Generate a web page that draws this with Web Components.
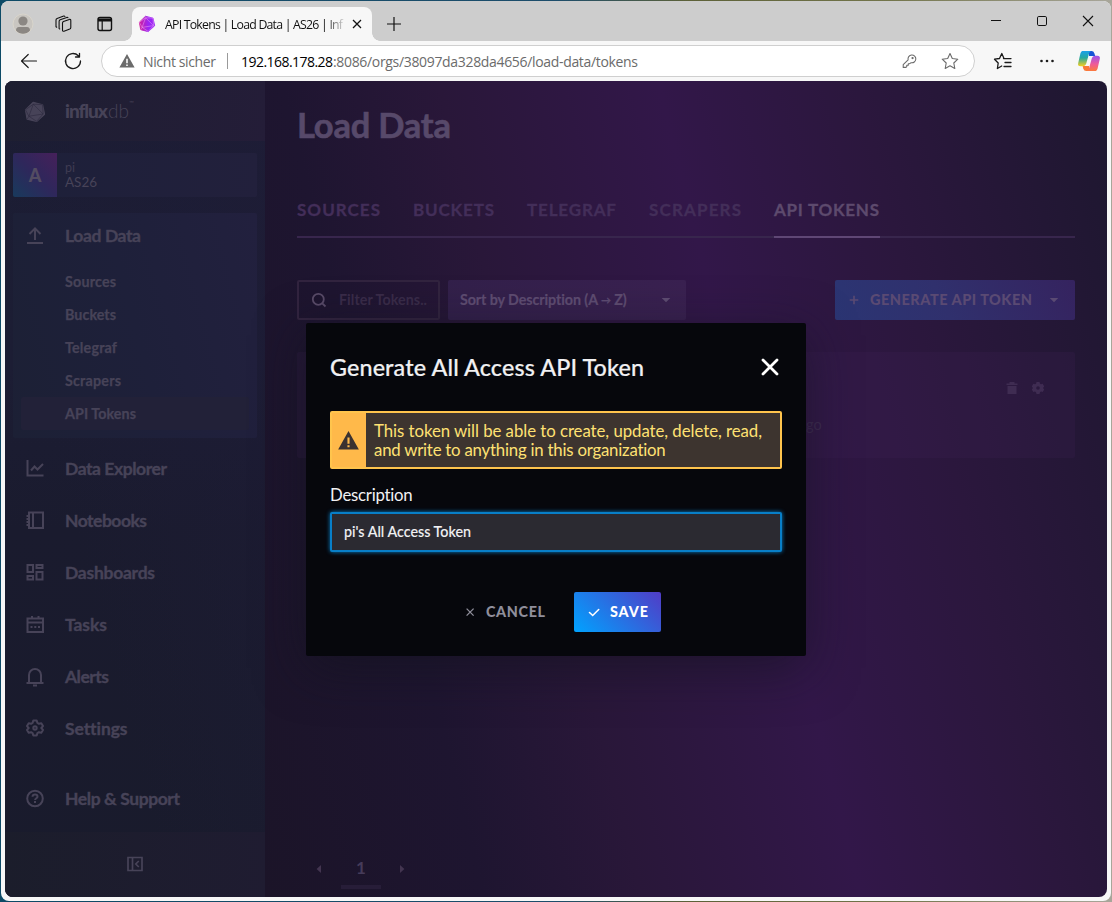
<!DOCTYPE html>
<html lang="de">
<head>
<meta charset="utf-8">
<title>API Tokens | Load Data | AS26 | InfluxDB</title>
<style>
html,body{margin:0;width:1112px;height:902px;overflow:hidden}
body{background:linear-gradient(90deg,#0d4a66 0,#1d4d6b 50%,#5d6138 62%,#73754b 80%,#a8a69a 100%);font-family:Lato,"Liberation Sans",sans-serif}
</style>
</head>
<body>
<browser-window></browser-window>
<script>
const define=(name,html,after)=>customElements.define(name,class extends HTMLElement{
  connectedCallback(){
    if(this.shadowRoot)return;
    const t=document.createElement('template');
    t.innerHTML=typeof html==='function'?html(this):html;
    this.attachShadow({mode:'open'}).append(t.content.cloneNode(true));
    if(after)after(this);
  }
});

const P={
  upload:'<g fill="none" stroke="currentColor" stroke-width="2"><path d="M9 14V2.500M3.500 8 9 2.400 14.500 8M1 17h16"/></g>',
  chart:'<g fill="none" stroke="currentColor" stroke-width="2"><path d="M1.500 1v15.500H17.500M5 11.500l3.500-4 3 3L17 5"/></g>',
  book:'<g fill="none" stroke="currentColor" stroke-width="2"><path d="M3 1.500h14v15.500H3zM7 1.500V17M.500 5H3M.500 8H3M.500 11H3M.500 14H3"/></g>',
  dash:'<g fill="none" stroke="currentColor" stroke-width="2"><path d="M1.500 2H7v7H1.500zM10.500 2h6v3h-6zM10.500 9h6v7.500h-6zM1.500 13H7v3.500H1.500z"/></g>',
  calendar:'<g fill="none" stroke="currentColor" stroke-width="2"><path d="M1.500 3.500h15.500v13.500H1.500zM1.500 7.500H17M6 1v3M12.500 1v3"/><path d="M4.500 12h2M8.300 12h2M12 12h2"/></g>',
  bell:'<g fill="none" stroke="currentColor" stroke-width="2"><path d="M.500 16h17M3 16V8a6 6 0 0 1 12 0v8"/><path d="M7 18.500h4"/></g>',
  gear:'<g fill="none" stroke="currentColor" stroke-width="2" stroke-linejoin="round"><path d="M7.300 1.500h3.400l.7 2.400 1.500.9 2.400-.6 1.700 2.900-1.700 1.900 1.700 1.900-1.700 2.900-2.400-.6-1.500.9-.7 2.400H7.300l-.7-2.400-1.500-.9-2.400.6L1 10.900 2.700 9 1 7.100l1.700-2.900 2.400.6 1.500-.9z"/><circle cx="9" cy="9" r="1.700"/></g>',
  help:'<g fill="none" stroke="currentColor" stroke-width="2"><circle cx="9" cy="9.500" r="7.800"/><path d="M6.500 7.700c.2-3 5-3 5 0 0 1.600-2.400 1.600-2.400 3.300M9 12.100v2"/></g>',
  collapse:'<g fill="none" stroke="currentColor" stroke-width="1.700"><path d="M2 2.500h14v13H2zM6.500 2.500v13M12.800 6 9.800 9l3 3"/></g>',
  search:'<g fill="none" stroke="currentColor" stroke-width="1.800"><circle cx="8.300" cy="8.300" r="5.500"/><path d="m12.300 12.300 3.200 3.200"/></g>',
  trash:'<path fill="currentColor" d="M3.500 4.500h3V3h5v1.500h3V6h-11zM4.500 7h9v8h-9z"/>',
  cog:'<path fill="currentColor" fill-rule="evenodd" d="M7.500 3h3l.5 1.700 1 .6 1.700-.5 1.500 2.600L14 9l1.200 1.400-1.500 2.600-1.700-.4-1 .6-.5 1.800h-3L7 13.200l-1-.6-1.700.4-1.500-2.600L4 9 2.800 7.400l1.500-2.600 1.700.5 1-.6zM9 7.200a1.800 1.800 0 1 0 0 3.600 1.800 1.800 0 0 0 0-3.600z"/>',
  caretDown:'<path fill="currentColor" d="M4.700 7h8.600L9 11.300z"/>',
  caretLeft:'<path fill="currentColor" d="M11 5v8L6.600 9z"/>',
  caretRight:'<path fill="currentColor" d="M7 5v8l4.400-4z"/>',
  plus:'<path stroke="currentColor" stroke-width="1.600" d="M9 4.700v8.600M4.700 9h8.600"/>',
  x:'<path stroke="currentColor" stroke-width="1.300" d="m5.600 5.600 7 7m0-7-7 7"/>',
  check:'<path fill="none" stroke="currentColor" stroke-width="1.600" stroke-linecap="round" d="m4.500 9.500 3.200 3 6-6"/>',
  close:'<path stroke="currentColor" stroke-width="2.800" stroke-linecap="round" d="m2 2 14 14m0-14L2 16"/>',
  warn:'<path fill="currentColor" fill-rule="evenodd" d="M9 0 18.800 17.500H-.8zM8 6.200h2V12H8zm0 7.300h2v2H8z"/>',
  back:'<path fill="none" stroke="currentColor" stroke-width="1.200" stroke-linecap="round" stroke-linejoin="round" d="M16.500 9H1.500m6.700-6.500L1.500 9l6.700 6.500"/>',
  reload:'<path fill="none" stroke="currentColor" stroke-width="1.300" stroke-linecap="round" stroke-linejoin="round" d="M16.500 9A7.500 7.500 0 1 1 14.300 3.700L15.500 5M15.500 1.300V5h-4"/>',
  star:'<path fill="none" stroke="currentColor" stroke-width="1.100" stroke-linejoin="round" d="m9 1.500 2.300 5 5.500.7-4 3.800 1 5.500L9 13.800l-4.800 2.700 1-5.500-4-3.800 5.500-.7z"/>',
  favs:'<g fill="none" stroke="currentColor" stroke-width="1.300" stroke-linejoin="round" stroke-linecap="round"><path d="M9.500 6.600H10L7.800 1.500l-2.300 5-5 .7 3.700 3.800-.8 5.500 4.300-2.500M10 6.600h7M11 10.500h6M10 14.500h7"/></g>',
  key:'<g fill="none" stroke="currentColor" stroke-width="1.200" stroke-linejoin="round"><path d="M8 7.600a4.400 4.400 0 1 1 3.400 3.300L9.700 12H8.200v1.700H6.500v1.600l-.9.900H2.500v-3z"/><circle cx="13" cy="5.700" r=".7" fill="currentColor"/></g>',
  dots:'<g fill="currentColor"><circle cx="3.500" cy="9" r="1.300"/><circle cx="9" cy="9" r="1.300"/><circle cx="14.500" cy="9" r="1.300"/></g>',
  tabx:'<path stroke="currentColor" stroke-width="1.400" d="m4.500 4.500 9 9m0-9-9 9"/>',
  newtab:'<path stroke="currentColor" stroke-width="1.200" d="M9 2v14M2 9h14"/>',
  min:'<path stroke="currentColor" stroke-width="1" d="M4 8.500h10"/>',
  max:'<rect x="4.500" y="4.500" width="9" height="9" rx="1.300" fill="none" stroke="currentColor"/>',
  winx:'<path stroke="currentColor" stroke-width="1.100" d="m4 4 10 10M14 4 4 14"/>',
  workspaces:'<g fill="none" stroke="currentColor" stroke-width="1.100" stroke-linejoin="round" stroke-linecap="round"><path d="M7.500 8q0-1.100 1-1.500l5.800-2.100q1.500-.4 1.500 1v7.200q0 1.100-1 1.500l-5.800 2.100q-1.500.4-1.500-1zM4.700 14l-.6-.4V6.400q0-1.200 1.100-1.600l6.600-2.400q.9-.2 1.200.4M1.700 12.200l-.7-.5V4.900q0-1.100 1.100-1.500L8.700 1q.9-.2 1.200.4"/></g>',
  tabs:'<rect x="2" y="2.500" width="13.500" height="13" rx="2" fill="none" stroke="currentColor" stroke-width="1.400"/><path fill="currentColor" d="M2 3.500h13.500V6.500H2z"/><path stroke="currentColor" stroke-width="1.200" d="M6.200 6v9.500"/>',
  person:'<circle cx="9" cy="9" r="10" fill="#c9c6c1" stroke="#d9d5cc"/><circle cx="9" cy="6" r="4.600" fill="#8b8783"/><path fill="#8b8783" d="M2 15.500q0-3.500 3-3.500h8q3 0 3 3.500-3 3.300-7 3.300t-7-3.300z"/>',
  influx:'<defs><linearGradient id="i" x2="1"><stop stop-color="var(--from,currentColor)"/><stop offset=".6" stop-color="var(--to,currentColor)"/></linearGradient></defs><path fill="url(#i)" stroke="url(#i)" stroke-width="1" stroke-linejoin="round" d="M7.300.3 15.800 2.400 17.600 11l-7.200 6.600-8.500-2.200L.4 7z"/><path fill="none" stroke="var(--cut,#2c293f)" stroke-width=".55" d="M7.500 2 3.500 12.800 16.300 10.800zM7.500 2 .4 7M7.500 2l8.300.4.500 8.400M3.500 12.800l6.900 4.600 5.900-6.600M.4 7l3.100 5.800-1.500 2.600"/>',
  copilot:'<defs><linearGradient id="a" x2="0" y2="1"><stop stop-color="#1aa0ea"/><stop offset=".45" stop-color="#25a8a0"/><stop offset="1" stop-color="#f6cf1c"/></linearGradient><linearGradient id="b" x2="0" y2="1"><stop stop-color="#9a52ec"/><stop offset=".55" stop-color="#f05a98"/><stop offset="1" stop-color="#fb7a3c"/></linearGradient></defs><path fill="#1553d6" d="M9 0h2.200q2 0 2.600 2l.8 2.500H9z"/><path fill="#f97a36" d="M9 18H6.500q-2 0-2.600-2l-.6-2.500H9z"/><path fill="url(#a)" d="M3 0h8q-1.400.4-1.900 2L6.600 11q-.8 2.700-3.200 2.700H1.500q-3-.1-2.200-3L1.300 2Q1.800.2 3 0z"/><path fill="url(#b)" d="M15 18H7q1.400-.4 1.900-2l2.500-9q.8-2.700 3.200-2.700h1.900q3 .1 2.200 3L16.700 16q-.5 1.800-1.700 2z"/>'
};
define('ui-icon',h=>{const s=h.getAttribute('size')||18;
  return `<style>:host{display:block;flex:none;width:${s}px;height:${s}px}svg{display:block;overflow:visible}</style><svg width="${s}" height="${s}" viewBox="0 0 18 18">${P[h.getAttribute('name')]}</svg>`});

define('browser-window',`<style>
:host{display:flex;flex-direction:column;box-sizing:border-box;width:1110px;height:900px;margin:1px;border-radius:8px;overflow:hidden;background:#f7f7f7}
.page{flex:1;display:flex;margin:0 4px 4px;border-radius:8px;overflow:hidden;background:linear-gradient(76deg,#1b1428 0,#1e1530 21%,#291739 36%,#321749 57%,#2b173d 76%,#1f1731 98%);background-size:842px 816px;background-position:right top;position:relative}
</style><edge-tabs></edge-tabs><edge-toolbar></edge-toolbar>
<div class="page"><side-nav></side-nav><load-data></load-data><token-dialog></token-dialog></div>`);

define('edge-tabs',`<style>
:host{display:flex;height:40px;background:#cdcdcd;font:12.300px "Open Sans","Noto Sans",sans-serif;align-items:center;color:#111}
.left{width:131px;display:flex;align-items:center;box-sizing:border-box;padding:6px 0 0 13px;gap:23px}
.tab{align-self:flex-end;position:relative;width:240px;height:34px;background:#f7f7f7;border-radius:8px 8px 0 0;display:flex;align-items:center;box-sizing:border-box;padding:0 7px}
.tab::before,.tab::after{content:"";position:absolute;bottom:0;width:8px;height:8px;left:-8px;background:radial-gradient(circle at 0 0,transparent 7.500px,#f7f7f7 8px)}
.tab::after{left:240px;background:radial-gradient(circle at 100% 0,transparent 7.500px,#f7f7f7 8px)}
.t{width:180px;margin-left:10px;white-space:nowrap;-webkit-mask:linear-gradient(90deg,#000 160px,transparent 182px);mask:linear-gradient(90deg,#000 160px,transparent 182px)}
.infl{--from:#d0209c;--to:#9a26f5;--cut:#f0a5f5}
.tabx{margin-left:auto}
.new{margin:6px 0 0 13px}.win{margin-left:auto;display:flex;gap:28px;padding-right:14px}
</style><div class="left"><ui-icon name="person"></ui-icon><ui-icon name="workspaces"></ui-icon><ui-icon name="tabs"></ui-icon></div>
<div class="tab"><ui-icon class="infl" name="influx" size="16"></ui-icon><div class="t"><fit-text w="178">API Tokens | Load Data | AS26 | Inf</fit-text></div><ui-icon class="tabx" name="tabx" size="16"></ui-icon></div>
<ui-icon class="new" name="newtab"></ui-icon>
<div class="win"><ui-icon name="min"></ui-icon><ui-icon name="max"></ui-icon><ui-icon name="winx"></ui-icon></div>`);

define('edge-toolbar',`<style>
:host{display:flex;height:40px;align-items:center;color:#1b1b1b;font:14px "Open Sans","Noto Sans",sans-serif}
.b1{margin-left:19px}.b2{margin-left:26px}
.addr{display:flex;align-items:center;box-sizing:border-box;width:874px;height:32px;margin-left:19px;border:1px solid #cfcfcf;border-radius:16px;background:#fff;padding:0 15px 0 18px;color:#6b6b6b}
.sep{width:1px;height:16px;background:#9a9a9a;margin:0 13px 0 11px}
.ns{margin-left:9px}b{font-weight:400;color:#000}.key{margin-left:auto}.st{margin-left:24px}
.f{margin-left:19px}.d{margin-left:26px}.c{margin-left:23px}
</style><ui-icon class="b1" name="back"></ui-icon><ui-icon class="b2" name="reload"></ui-icon>
<div class="addr"><ui-icon name="warn" size="14"></ui-icon><fit-text class="ns" w="73">Nicht sicher</fit-text><span class="sep"></span><fit-text w="92"><b>192.168.178.28</b></fit-text><fit-text w="305">:8086/orgs/38097da328da4656/load-data/tokens</fit-text><ui-icon class="key" name="key" size="16"></ui-icon><ui-icon class="st" name="star"></ui-icon></div>
<ui-icon class="f" name="favs"></ui-icon><ui-icon class="d" name="dots"></ui-icon><ui-icon class="c" name="copilot" size="20"></ui-icon>`);

define('nav-item',h=>`<style>:host{display:flex;align-items:center;height:44px;padding-left:13px;font:700 17.500px Lato,sans-serif;-webkit-text-stroke:.35px currentColor}
ui-icon{margin-right:21px}</style><ui-icon name="${h.getAttribute('icon')}"></ui-icon><slot></slot>`);
define('nav-sub',`<style>:host{display:flex;align-items:center;height:33px;margin:0 8px;padding-left:44px;border-radius:2px;font:700 14.300px Lato,sans-serif;-webkit-text-stroke:.25px currentColor}
:host([active]){background:#222138}::slotted(fit-text){padding-bottom:1px}</style><slot></slot>`);

define('side-nav',`<style>
:host{display:flex;flex-direction:column;width:260px;flex:none;color:#474358;background:linear-gradient(75deg,rgba(31,28,56,0) 35%,rgba(31,28,56,.6)),linear-gradient(180deg,#1b1d33 0,#1c1d34 35%,#1a1b2e 55%,#191b2c 100%)}
.logo{height:60px;display:flex;align-items:center;padding-left:20px;background:linear-gradient(90deg,#1e1f31,#241d38);box-sizing:border-box}
.logo ui-icon{margin:1px 20px 0 0}.name{display:flex;font-size:19px;align-items:flex-start;padding-bottom:1px}.name b{font-weight:900}.light{font-weight:300}.tm{font-size:6px}
.org{margin:12px 8px 16px;height:44px;display:flex;background:linear-gradient(90deg,#1d2039,#22203c);border-radius:2px;overflow:hidden}
.av{width:44px;background:linear-gradient(45deg,#183a5c,#2e275b 50%,#46205a);display:grid;place-items:center;font-size:18px;font-weight:900;color:#534c62}
.who{display:flex;flex-direction:column;padding:8px 0 0 8px;font-size:13.500px;line-height:14px;align-items:flex-start}.pi{color:#3e3b52;font-size:12.500px}
.group{margin:0 8px 8px;height:225px;background:linear-gradient(75deg,#1c2035,#1e203a 50%,#22203e);border-radius:2px}
.subs{margin-top:8px}
.list{margin:0 8px;display:flex;flex-direction:column;gap:8px}.hs{margin-top:18px}
.foot{margin-top:auto;height:65px;display:grid;place-items:center;padding-bottom:2px;box-sizing:border-box;background:linear-gradient(90deg,#1b1d2b,#1f1c31)}
</style>
<div class="logo"><ui-icon name="influx" size="20"></ui-icon><span class="name"><b><fit-text w="43">influx</fit-text></b><span class="light"><fit-text w="21">db</fit-text></span><span class="tm">™</span></span></div>
<div class="org"><div class="av">A</div><div class="who"><fit-text class="pi" w="10">pi</fit-text><fit-text w="32">AS26</fit-text></div></div>
<div class="group"><nav-item icon="upload"><fit-text w="76">Load Data</fit-text></nav-item>
<div class="subs"><nav-sub><fit-text w="51">Sources</fit-text></nav-sub><nav-sub><fit-text w="51">Buckets</fit-text></nav-sub><nav-sub><fit-text w="52">Telegraf</fit-text></nav-sub><nav-sub><fit-text w="56">Scrapers</fit-text></nav-sub><nav-sub active><fit-text w="71">API Tokens</fit-text></nav-sub></div></div>
<div class="list">
<nav-item icon="chart"><fit-text w="102">Data Explorer</fit-text></nav-item>
<nav-item icon="book"><fit-text w="82">Notebooks</fit-text></nav-item>
<nav-item icon="dash"><fit-text w="90">Dashboards</fit-text></nav-item>
<nav-item icon="calendar"><fit-text w="42">Tasks</fit-text></nav-item>
<nav-item icon="bell"><fit-text w="44">Alerts</fit-text></nav-item>
<nav-item icon="gear"><fit-text w="62">Settings</fit-text></nav-item>
<nav-item class="hs" icon="help"><fit-text w="115">Help &amp; Support</fit-text></nav-item>
</div><div class="foot"><ui-icon name="collapse"></ui-icon></div>`);

define('load-data',`<style>
:host{display:flex;flex-direction:column;flex:1;padding:0 32px;color:#5b4b6b;font-weight:700}
h1{margin:24px 0 0;font:700 34.500px/40px Lato,sans-serif;color:#57496a;-webkit-text-stroke:.6px currentColor}
.tabs{display:flex;gap:33px;height:45px;margin-top:48px;border-bottom:2px solid #38264d;box-sizing:border-box;font-size:17px;line-height:34px;color:#432e59;-webkit-text-stroke:.3px currentColor}
.tabs .on{color:#5d4a6d;border-bottom:2px solid #5f4775;height:43px;width:106px}
.bar{display:flex;margin-top:42px;height:40px}.bar fit-text{padding-bottom:1px}
.search{box-sizing:border-box;width:143px;border:2px solid #32243f;border-radius:2px;display:flex;align-items:center;padding-left:11px;font-size:14.300px;color:#3a2c49}
.search ui-icon{color:#594b68;margin-right:11px}
.sort{margin-left:8px;box-sizing:border-box;width:238px;background:linear-gradient(65deg,#32204a,#3a2151);border-radius:2px;display:flex;align-items:center;padding:0 11px 0 12px;font-size:14.300px;color:#5f4d72;justify-content:space-between;-webkit-text-stroke:.2px currentColor}
.arrow{font-size:10px;vertical-align:1px}
.gen{margin-left:auto;box-sizing:border-box;width:240px;border-radius:2px;background:linear-gradient(65deg,#2b3573,#30306d 45%,#35235f);display:flex;align-items:center;padding:0 12px 0 10px;font-size:14.500px;font-weight:900;color:#5a4a73}
.gen ui-icon:first-child{margin-right:7px}.gen ui-icon:last-child{margin-left:auto}
.card{margin-top:32px;height:106px;border-radius:2px;background:rgba(64,35,85,.22);box-sizing:border-box;padding:27px 28px 0 0;display:flex;flex-direction:column;align-items:flex-end;color:#3f2c52}
.tools{display:flex;gap:8px}.date{align-self:flex-start;margin:19px 0 0 509px;font-size:14.500px;font-weight:400}
.pages{margin-top:auto;margin-bottom:7px;display:flex;align-items:flex-start;padding-left:13px;height:30px;color:#433550}
.n{width:40px;height:29px;box-sizing:border-box;border-bottom:4px solid #271d38;text-align:center;font-size:17px;line-height:16px;margin:0 12px 0 13px;color:#453b59}
</style>
<h1><fit-text w="154">Load Data</fit-text></h1>
<div class="tabs"><fit-text w="83">SOURCES</fit-text><fit-text w="81">BUCKETS</fit-text><fit-text w="89">TELEGRAF</fit-text><fit-text w="92">SCRAPERS</fit-text><div class="on"><fit-text w="105">API TOKENS</fit-text></div></div>
<div class="bar"><div class="search"><ui-icon name="search"></ui-icon><fit-text w="88">Filter Tokens..</fit-text></div><div class="sort"><fit-text w="167">Sort by Description (A <span class="arrow">→</span> Z)</fit-text><ui-icon name="caretDown"></ui-icon></div>
<div class="gen"><ui-icon name="plus"></ui-icon><fit-text w="162">GENERATE API TOKEN</fit-text><ui-icon name="caretDown"></ui-icon></div></div>
<div class="card"><div class="tools"><ui-icon name="trash"></ui-icon><ui-icon name="cog"></ui-icon></div><div class="date">go</div></div>
<div class="pages"><ui-icon name="caretLeft"></ui-icon><div class="n">1</div><ui-icon name="caretRight"></ui-icon></div>`);

define('token-dialog',`<style>
:host{position:absolute;left:301px;top:242px;width:500px;height:333px;box-sizing:border-box;padding:0 24px;background:#06070c;border-radius:2px;color:#f1f1f3;box-shadow:0 12px 50px rgba(18,18,30,.6);display:flex;flex-direction:column}
.head{display:flex;height:88px;align-items:center;justify-content:space-between;font-size:23.300px;font-weight:500;padding-right:3px;-webkit-text-stroke:.2px currentColor}
.head ui-icon{color:#fff}.foot fit-text{padding-bottom:2px}
.alert{box-sizing:border-box;height:58px;border:2px solid #ffc44d;border-radius:2px;background:#3d342f;display:flex;color:#ffe173}
.ic{width:34px;background:#ffb94a;color:#3b3230;display:flex;align-items:center;justify-content:center;padding-right:2px;box-sizing:border-box}
.msg{padding:8px 0 0 8px;font-size:16.800px;line-height:19px;display:flex;flex-direction:column;align-items:flex-start}
label{font-size:16.800px;line-height:20px;margin:16px 0 7px;display:block}
.field{box-sizing:border-box;height:40px;border:2px solid #087fc8;border-radius:2px;background:#2b2a31;box-shadow:0 0 4px #087fc8;padding:0 0 2px 12px;display:flex;align-items:center;font-size:14.300px;font-weight:500;-webkit-text-stroke:.1px currentColor}
.foot{display:flex;height:40px;margin-top:40px;font-size:14.300px;font-weight:900}
.cancel,.save{display:flex;align-items:center}.cancel{color:#8f8e9b;margin-left:131px;width:85px}.cancel ui-icon{margin-right:7px}
.save{margin-left:28px;width:87px;box-sizing:border-box;padding-left:11px;border-radius:2px;background:linear-gradient(45deg,#00a3ff,#513cc6);color:#fff}.save ui-icon{margin-right:7px}
</style>
<div class="head"><fit-text w="314">Generate All Access API Token</fit-text><ui-icon name="close"></ui-icon></div>
<div class="alert"><div class="ic"><ui-icon name="warn" size="19"></ui-icon></div><div class="msg"><fit-text w="388">This token will be able to create, update, delete, read,</fit-text><fit-text w="292">and write to anything in this organization</fit-text></div></div>
<label><fit-text w="83">Description</fit-text></label>
<div class="field"><fit-text w="127">pi's All Access Token</fit-text></div>
<div class="foot"><div class="cancel"><ui-icon name="x"></ui-icon><fit-text w="59">CANCEL</fit-text></div><div class="save"><ui-icon name="check"></ui-icon><fit-text w="38">SAVE</fit-text></div></div>`);

/* Tracks its text so that the line takes exactly w pixels. */
define('fit-text','<style>:host{display:inline-block;white-space:nowrap;flex:none}</style><slot></slot>',h=>{
  const w=+h.getAttribute('w'),n=h.textContent.length;
  const ls=(w-h.getBoundingClientRect().width)/(n-1);
  h.style.letterSpacing=ls+'px';h.style.marginRight=-ls+'px';
});
</script>
</body>
</html>
